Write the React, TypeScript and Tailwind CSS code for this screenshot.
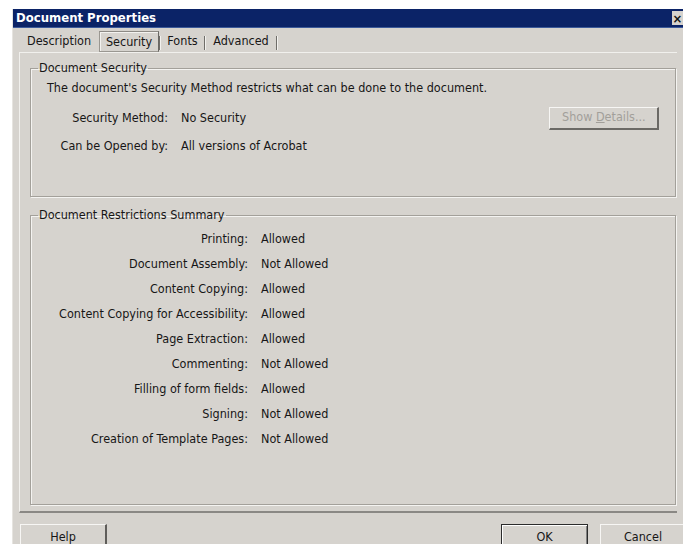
import type { ReactNode } from "react";

const restrictions: [string, string][] = [
  ["Printing", "Allowed"],
  ["Document Assembly", "Not Allowed"],
  ["Content Copying", "Allowed"],
  ["Content Copying for Accessibility", "Allowed"],
  ["Page Extraction", "Allowed"],
  ["Commenting", "Not Allowed"],
  ["Filling of form fields", "Allowed"],
  ["Signing", "Not Allowed"],
  ["Creation of Template Pages", "Not Allowed"],
];

const GroupBox = ({ title, className, children }: { title: string; className?: string; children: ReactNode }) => (
  <fieldset
    className={`border border-[#a3a09a] shadow-[inset_1px_1px_0_#f4f3f1,1px_1px_0_#f4f3f1] ${className ?? ""}`}
  >
    <legend className="ml-[7px] px-[1px] leading-[14px]">{title}</legend>
    {children}
  </fieldset>
);

const Separator = () => (
  <div className="mb-[2px] h-[14px] w-[2px] border-l border-[#6f6d69] border-r border-r-[#f2f1ee]" />
);

const DialogButton = ({ label, primary }: { label: string; primary?: boolean }) => (
  <button
    className={`flex h-[24px] w-[87px] items-start justify-center pt-[3px] ${
      primary
        ? "border border-[#2b2b2b] shadow-[inset_1px_1px_0_#fff,inset_-1px_-1px_0_#808080]"
        : "border-t border-l border-t-[#f7f6f4] border-l-[#f7f6f4] border-r-2 border-r-[#5f5d5a]"
    }`}
  >
    {label}
  </button>
);

export default function App() {
  return (
    <div className="h-[544px] w-[683px] overflow-hidden bg-white pl-[12px] pt-[9px] font-['DejaVu_Sans_Condensed','DejaVu_Sans',sans-serif] text-[12.5px] text-[#161616] [font-stretch:condensed]">
      <div className="flex h-[560px] w-[680px] flex-col border-l border-[#e6e4e0] bg-[#d6d3ce]">
        {/* caption */}
        <div className="flex h-[19px] items-center border-b border-[#3c5a9a] bg-[#0b2367] pl-[3px] text-[13px] font-bold text-white">
          <span>Document Properties</span>
          <span className="ml-auto mr-[9px] flex h-[14px] w-[11px] items-center justify-center bg-[#d6d3ce] text-[13px] leading-none text-[#111]">
            ×
          </span>
        </div>

        {/* tabs */}
        <div className="flex h-[24px] items-end pl-[9px]">
          <div className="w-[74px] pb-[1px] text-center">Description</div>
          <div className="ml-[3px] flex h-[21px] w-[60px] items-center justify-center border border-[#9a9791] border-t-[#8d8a85] border-r-[#6a6864] pt-[2px] shadow-[inset_1px_1px_0_#f3f2ef]">
            Security
          </div>
          <Separator />
          <div className="w-[43px] pb-[1px] text-center">Fonts</div>
          <Separator />
          <div className="w-[70px] pb-[1px] text-center">Advanced</div>
          <Separator />
        </div>

        {/* tab page */}
        <div className="ml-[6px] mr-[15px] flex h-[461px] flex-col border-t border-l border-t-[#f1f0ed] border-l-[#f1f0ed] border-b-2 border-b-[#8a8884] bg-[#d6d3ce] pl-[10px] pr-[1px] pt-[8px]">
          <GroupBox title="Document Security" className="h-[136px]">
            <div className="pl-[16px]">
              <p className="mt-[4px]">The document's Security Method restricts what can be done to the document.</p>
              <div className="mt-[9px] flex items-center">
                <span className="w-[121px] text-right">Security Method:</span>
                <span className="ml-[13px]">No Security</span>
                <button className="ml-auto mr-[16px] h-[23px] w-[110px] border-t border-l border-[#f7f6f4] border-r-2 border-b-2 border-r-[#6b6965] border-b-[#6b6965] pl-[12px] text-left text-[#a29f9a]">
                  Show <span className="underline">D</span>etails...
                </button>
              </div>
              <div className="mt-[7px] flex">
                <span className="w-[121px] text-right">Can be Opened by:</span>
                <span className="ml-[13px]">All versions of Acrobat</span>
              </div>
            </div>
          </GroupBox>

          <GroupBox title="Document Restrictions Summary" className="mt-[11px] h-[297px]">
            <div className="mt-[5px] flex flex-col">
              {restrictions.map(([label, value]) => (
                <div key={label} className="flex h-[25px] items-center">
                  <span className="w-[217px] text-right">{label}:</span>
                  <span className="ml-[13px]">{value}</span>
                </div>
              ))}
            </div>
          </GroupBox>
        </div>

        {/* dialog buttons */}
        <div className="mt-[11px] flex pl-[7px]">
          <DialogButton label="Help" />
          <div className="ml-auto flex gap-[12px] pr-[5px]">
            <DialogButton label="OK" primary />
            <DialogButton label="Cancel" />
          </div>
        </div>
      </div>
    </div>
  );
}
